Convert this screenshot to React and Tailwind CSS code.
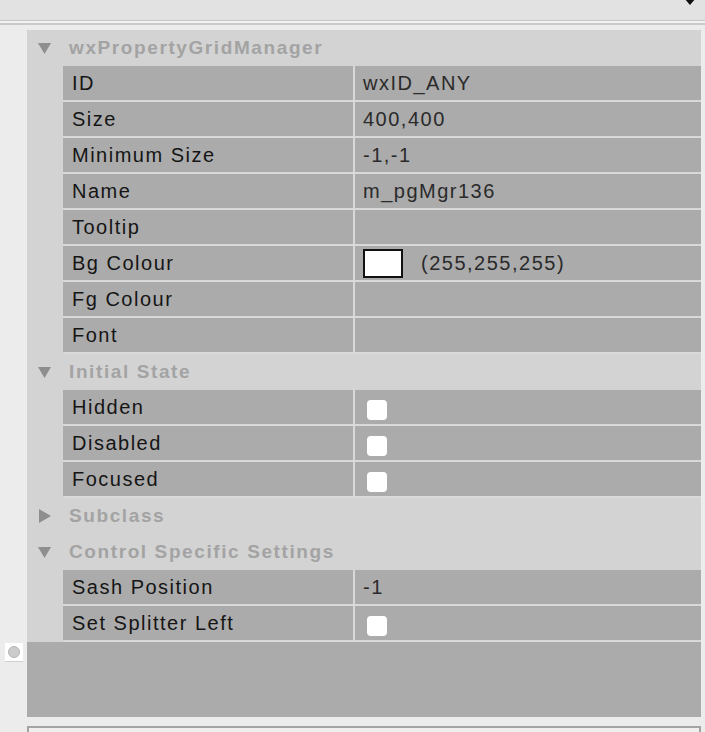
const props = [
  { type: 'cat', label: 'wxPropertyGridManager', open: true },
  { label: 'ID', value: 'wxID_ANY' },
  { label: 'Size', value: '400,400' },
  { label: 'Minimum Size', value: '-1,-1' },
  { label: 'Name', value: 'm_pgMgr136' },
  { label: 'Tooltip', value: '' },
  { label: 'Bg Colour', value: '(255,255,255)', swatch: true },
  { label: 'Fg Colour', value: '' },
  { label: 'Font', value: '' },
  { type: 'cat', label: 'Initial State', open: true },
  { label: 'Hidden', check: true },
  { label: 'Disabled', check: true },
  { label: 'Focused', check: true },
  { type: 'cat', label: 'Subclass', open: false },
  { type: 'cat', label: 'Control Specific Settings', open: true },
  { label: 'Sash Position', value: '-1' },
  { label: 'Set Splitter Left', check: true },
]

function Arrow({ open }) {
  return open ? (
    <svg width="13" height="12" viewBox="0 0 13 12" className="ml-[11px] mr-[18px] shrink-0">
      <path d="M0 1 L13 1 L6.5 12 Z" fill="#8e8e8e" />
    </svg>
  ) : (
    <svg width="12" height="14" viewBox="0 0 12 14" className="ml-[12px] mr-[18px] shrink-0">
      <path d="M0 0 L12 7 L0 14 Z" fill="#8e8e8e" />
    </svg>
  )
}

function Row({ p }) {
  if (p.type === 'cat') {
    return (
      <div className="h-[36px] flex items-center">
        <Arrow open={p.open} />
        <span className="text-[19px] font-bold tracking-[1.6px] text-[#a3a3a3]">{p.label}</span>
      </div>
    )
  }
  return (
    <div className="h-[36px] flex ml-[36px] border-b-2 border-[#d9d9d9]">
      <div className="w-[290px] bg-[#ababab] flex items-center pl-[9px] text-[20px] tracking-[1.5px] text-[#151515]">
        {p.label}
      </div>
      <div className="w-[2px] bg-[#d9d9d9]" />
      <div className="flex-1 bg-[#ababab] flex items-center pl-[8px] text-[20px] tracking-[1.5px] text-[#2a2a2a]">
        {p.swatch && <div className="w-[40px] h-[29px] border-2 border-[#111] bg-white mr-[18px]" />}
        {p.check && <div className="w-[20px] h-[20px] rounded-[4px] bg-white ml-[4px] mt-[6px]" />}
        {p.value}
      </div>
    </div>
  )
}

export default function App() {
  return (
    <div className="w-[705px] h-[732px] overflow-hidden bg-[#ececec] font-['Liberation_Sans',Arial,sans-serif] relative">
      <div className="h-[20px] bg-[#e2e2e2] relative">
        <svg width="12" height="8" viewBox="0 0 12 8" className="absolute right-[9px] -top-[2px]">
          <path d="M0 0 L12 0 L6 7 Z" fill="#111" />
        </svg>
      </div>
      <div className="h-[1px] bg-[#c6c6c6]" />
      <div className="h-[2px] bg-[#f2f2f2]" />
      <div className="h-[2px] bg-[#c9c9c9]" />
      <div className="h-[5px]" />
      <div className="flex">
        <div className="w-[27px] relative">
          <div className="absolute left-[5px] top-[613px] w-[18px] h-[19px] bg-white border-b border-[#cfcfcf] flex items-center justify-center">
            <div className="w-[12px] h-[12px] rounded-full bg-[#cbcbcb] border border-[#b5b5b5]" />
          </div>
        </div>
        <div className="w-[674px] bg-[#d3d3d3]">
          {props.map((p, i) => <Row key={i} p={p} />)}
          <div className="h-[75px] bg-[#ababab]" />
        </div>
      </div>
      <div className="h-[9px]" />
      <div className="ml-[27px] w-[674px] h-[20px] border-2 border-[#a3a3a3] bg-[#efefef]" />
    </div>
  )
}
